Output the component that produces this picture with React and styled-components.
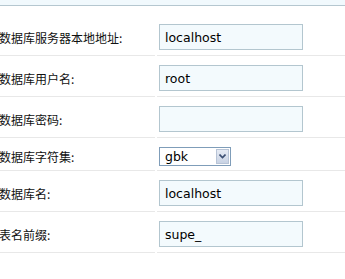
import React from 'react';
import styled, { createGlobalStyle } from 'styled-components';

const GlobalStyle = createGlobalStyle`
  html, body {
    margin: 0;
    padding: 0;
    background: #ffffff;
    overflow: hidden;
  }
  body {
    font-family: "Noto Sans CJK SC", "Noto Sans", sans-serif;
  }
`;

const TopBand = styled.div`
  height: 5px;
  background: #f1f9fd;
  border-bottom: 1px solid #b5c7d0;
`;

const Form = styled.div`
  display: flex;
  flex-direction: column;
  padding-top: 9px;
`;

const Row = styled.div`
  display: grid;
  grid-template-columns: 155px 1fr;
  column-gap: 2px;
`;

const Cell = styled.div`
  display: flex;
  align-items: center;
  border-bottom: 1px solid #e8e8e8;
  padding: 9px 0 ${p => (p.$tight ? '4px' : '5px')};
`;

const Label = styled(Cell)`
  margin-left: -1px;
  font-size: 12px;
  color: #111;
  white-space: nowrap;
`;

const TextInput = styled.input`
  box-sizing: border-box;
  width: 144px;
  height: 26px;
  margin: 0 0 0 2px;
  padding: 0 5px;
  border: 1px solid #b3c6cf;
  background: #f3fafd;
  font-family: "DejaVu Sans", Verdana, sans-serif;
  font-size: 12.5px;
  color: #000;
  outline: none;
`;

const SelectBox = styled.div`
  position: relative;
  box-sizing: border-box;
  width: 72px;
  height: 19px;
  margin-left: 2px;
  border: 1px solid #7f9db9;
  background: #fff;
  overflow: hidden;
`;

const NativeSelect = styled.select`
  appearance: none;
  display: block;
  box-sizing: border-box;
  width: 100%;
  height: 17px;
  margin: 0;
  padding: 0 0 0 5px;
  border: 0;
  background: transparent;
  font-family: "DejaVu Sans", Verdana, sans-serif;
  font-size: 12.5px;
  line-height: 17px;
  color: #000;
  outline: none;
`;

const ArrowButton = styled.span`
  position: absolute;
  top: 1px;
  right: 1px;
  bottom: 1px;
  width: 13px;
  box-sizing: border-box;
  display: flex;
  align-items: center;
  justify-content: center;
  border: 1px solid #b8c4d6;
  background: linear-gradient(#e6ebf4, #c9d3e4);
  pointer-events: none;
`;

const fields = [
  { label: '数据库服务器本地地址:', value: 'localhost' },
  { label: '数据库用户名:', value: 'root' },
  { label: '数据库密码:', value: '' },
  { label: '数据库字符集:', select: ['gbk', 'utf8', 'latin1'] },
  { label: '数据库名:', value: 'localhost' },
  { label: '表名前缀:', value: 'supe_' },
];

const Chevron = () => (
  <svg width="7" height="5" viewBox="0 0 7 5">
    <path d="M0.5 0.5 L3.5 3.5 L6.5 0.5" fill="none" stroke="#3c4f73" strokeWidth="1.6" />
  </svg>
);

const App = () => (
  <>
    <GlobalStyle />
    <TopBand />
    <Form>
      {fields.map(f => (
        <Row key={f.label}>
          <Label $tight={!!f.select}>{f.label}</Label>
          <Cell $tight={!!f.select}>
            {f.select ? (
              <SelectBox>
                <NativeSelect defaultValue={f.select[0]}>
                  {f.select.map(o => (
                    <option key={o} value={o}>{o}</option>
                  ))}
                </NativeSelect>
                <ArrowButton><Chevron /></ArrowButton>
              </SelectBox>
            ) : (
              <TextInput type={f.label === '数据库密码:' ? 'password' : 'text'} defaultValue={f.value} />
            )}
          </Cell>
        </Row>
      ))}
    </Form>
  </>
);

export default App;
